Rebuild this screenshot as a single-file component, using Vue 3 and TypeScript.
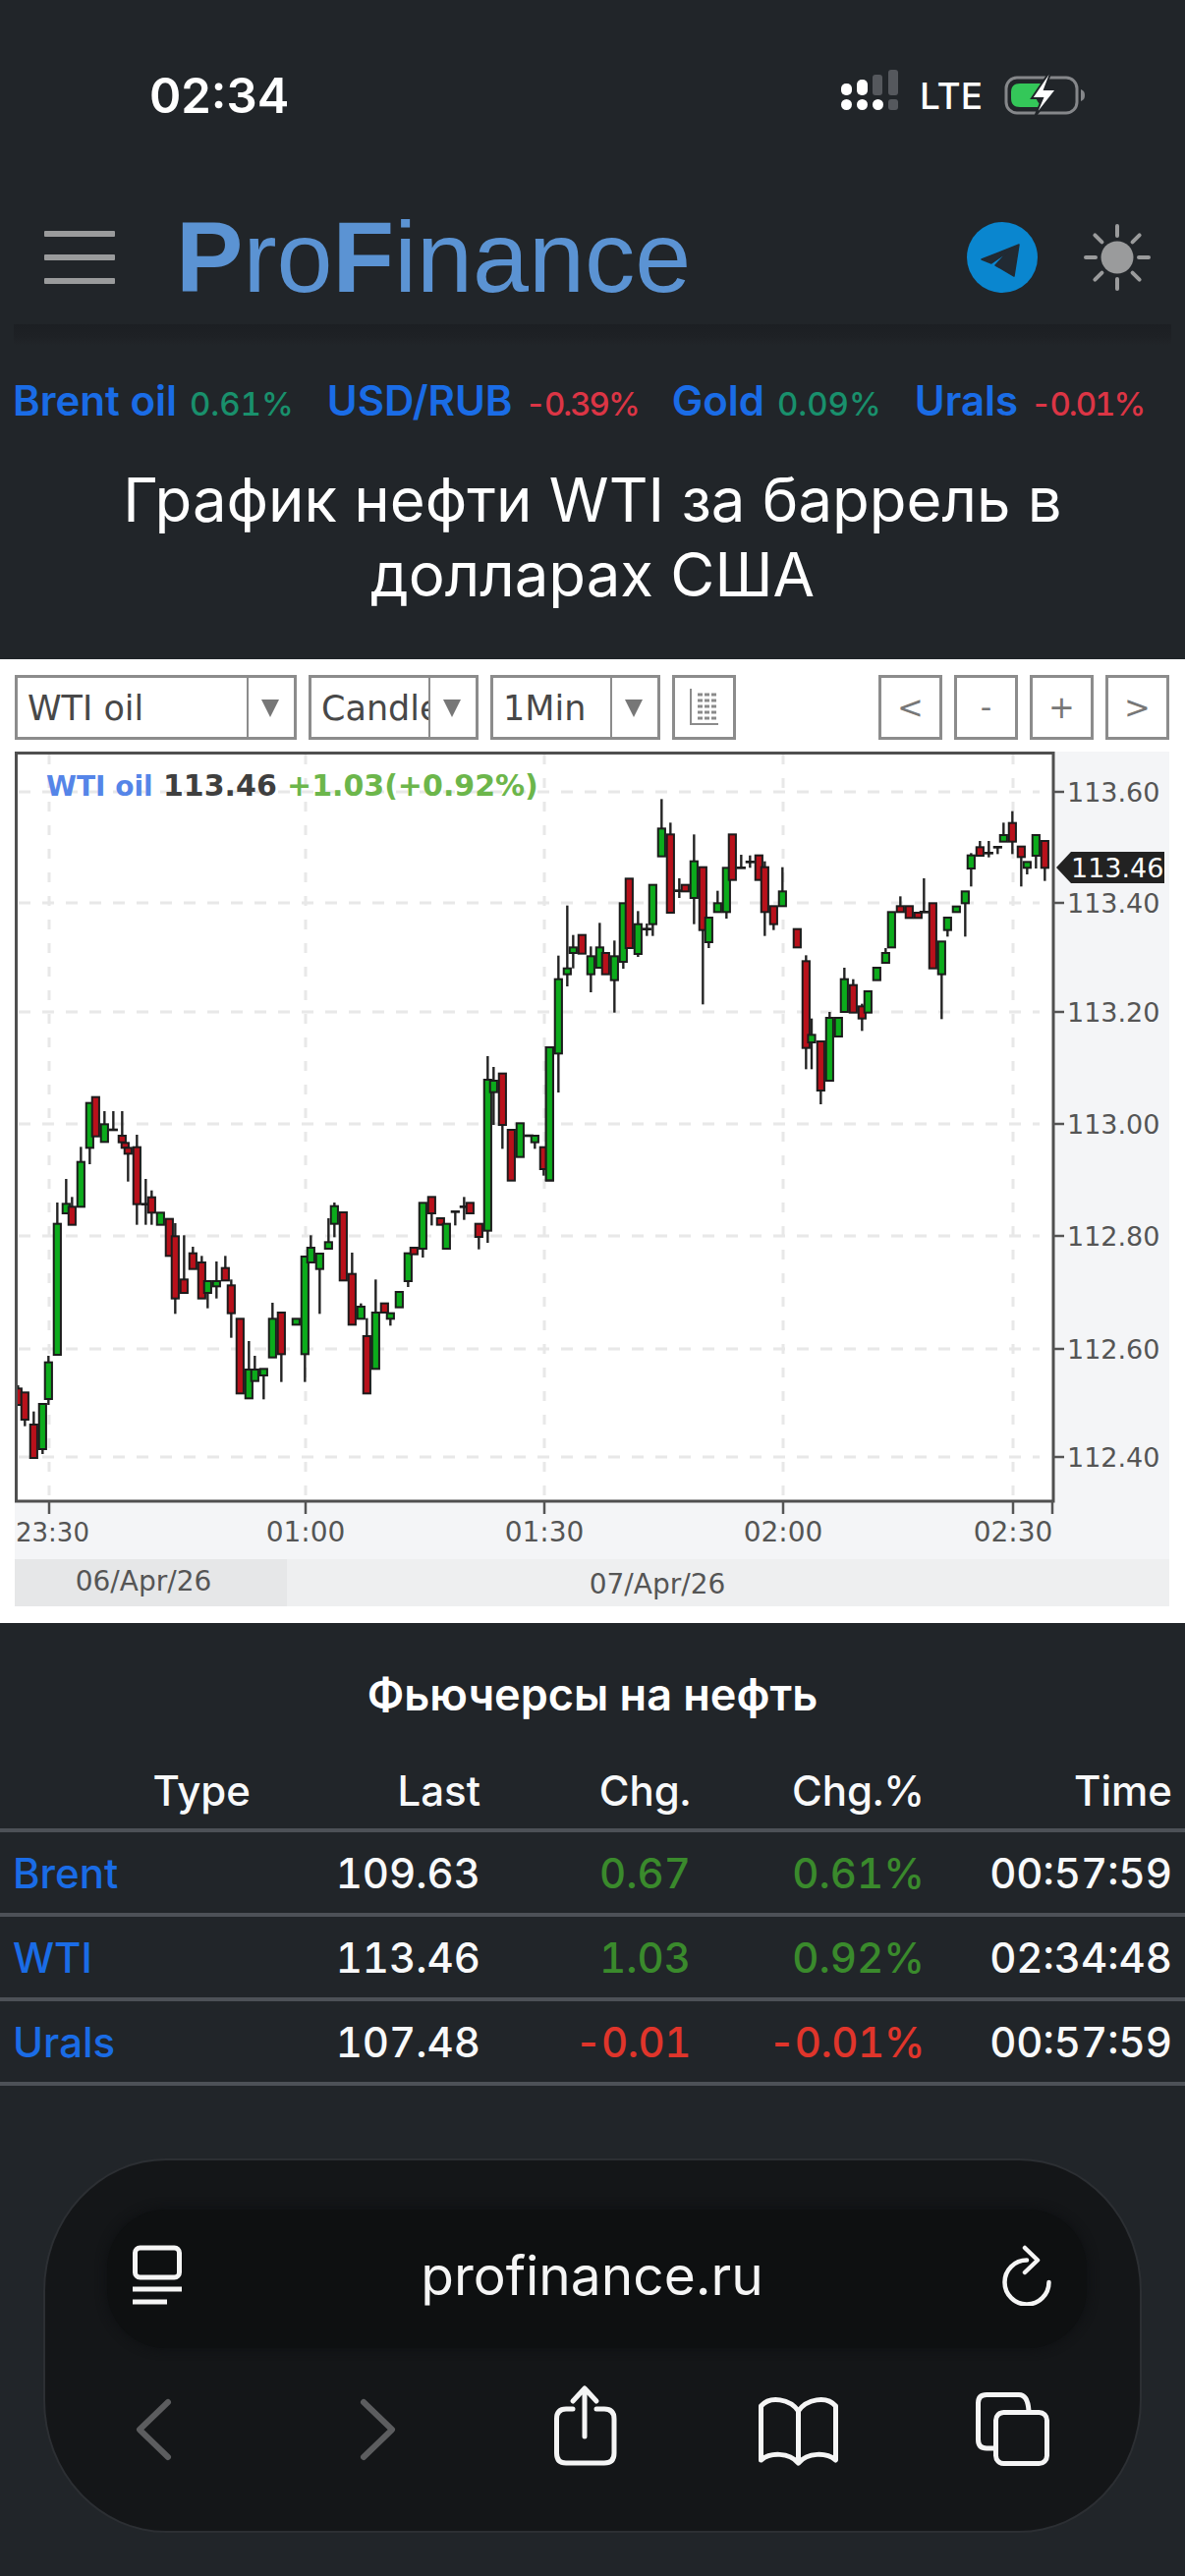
<script setup lang="ts">
// [x, bodyTop, bodyBottom, wickTop, wickBottom, up], read from chart crops (3x)
type Row = [number, number, number, number, number, number]

const fromCrop = (ox: number, oy: number, rows: Row[]) =>
  rows.map(([x, t, b, hi, lo, up]) => ({
    x: ox + x / 3,
    top: oy + t / 3,
    bottom: oy + b / 3,
    hi: oy + hi / 3,
    lo: oy + lo / 3,
    up: up === 1
  }))

const candles = [
  ...fromCrop(0, 1080, [
    [55, 1000, 1050, 990, 1050, 0], [76, 1012, 1095, 1012, 1115, 0], [103, 1110, 1212, 1070, 1212, 0],
    [130, 1047, 1185, 1047, 1200, 1], [148, 920, 1032, 900, 1050, 1], [175, 497, 897, 432, 897, 1],
    [202, 436, 465, 360, 465, 1], [220, 445, 500, 415, 500, 0], [247, 308, 445, 262, 445, 1],
    [274, 128, 265, 128, 315, 1], [292, 110, 230, 110, 230, 0], [319, 193, 247, 153, 247, 1],
    [346, 209, 211, 153, 212, 1], [373, 228, 248, 153, 248, 0], [382, 250, 265, 250, 265, 0],
    [391, 265, 283, 265, 368, 0], [418, 263, 437, 225, 500, 0], [445, 436, 438, 360, 500, 1],
    [463, 416, 463, 395, 500, 0], [490, 463, 500, 463, 500, 1], [517, 482, 595, 482, 595, 0],
    [535, 535, 725, 495, 772, 0], [562, 667, 708, 532, 708, 0], [589, 587, 635, 567, 635, 0],
    [616, 615, 725, 595, 725, 0], [634, 672, 708, 672, 755, 1], [661, 672, 688, 612, 725, 1],
    [688, 632, 670, 595, 670, 0], [706, 685, 770, 667, 845, 0], [733, 787, 1015, 787, 1015, 0],
    [760, 942, 1030, 855, 1030, 1], [778, 942, 977, 900, 977, 1], [805, 940, 960, 940, 1033, 1],
    [832, 787, 905, 738, 905, 1], [859, 768, 895, 768, 980, 0], [904, 787, 805, 787, 805, 1],
    [931, 597, 895, 597, 980, 1], [949, 570, 615, 532, 615, 1], [976, 588, 635, 588, 772, 1],
    [1003, 553, 573, 480, 573, 1], [1021, 443, 497, 432, 538, 1], [1048, 462, 670, 462, 670, 0],
    [1075, 650, 805, 585, 805, 0], [1102, 750, 787, 740, 787, 1], [1120, 840, 1015, 785, 1015, 0],
    [1147, 768, 940, 667, 940, 1], [1174, 740, 768, 740, 768, 0], [1192, 770, 787, 770, 808, 1]
  ]),
  ...fromCrop(340, 1080, [
    [199, 705, 752, 705, 752, 1], [226, 587, 672, 587, 690, 1], [244, 570, 590, 570, 590, 0],
    [271, 433, 573, 433, 600, 1], [298, 415, 465, 415, 502, 0], [325, 480, 500, 480, 500, 0],
    [343, 497, 573, 497, 573, 1], [370, 459, 461, 460, 502, 1], [397, 444, 446, 415, 485, 1],
    [415, 433, 465, 433, 465, 0], [442, 497, 537, 497, 575, 0], [469, 57, 518, -15, 555, 1],
    [487, 60, 95, 18, 195, 1], [514, 38, 195, 38, 268, 0], [541, 210, 365, 210, 365, 0],
    [568, 190, 293, 190, 293, 1], [595, 227, 229, 228, 230, 1], [613, 228, 248, 228, 268, 1],
    [640, 263, 330, 263, 350, 0], [658, -42, 365, -42, 365, 1]
  ]),
  ...fromCrop(400, 780, [
    [478, 858, 1264, 858, 1264, 1], [505, 650, 877, 578, 996, 1], [532, 617, 635, 425, 672, 1],
    [550, 553, 570, 515, 617, 1], [577, 515, 572, 515, 572, 0], [604, 580, 635, 550, 690, 1],
    [631, 553, 615, 478, 615, 1], [649, 570, 635, 570, 635, 0], [676, 580, 653, 532, 752, 1],
    [703, 418, 597, 418, 618, 1], [721, 343, 555, 343, 555, 0], [748, 482, 573, 442, 582, 1],
    [775, 496, 498, 480, 518, 1], [793, 362, 482, 362, 518, 1], [820, 190, 275, 100, 275, 1],
    [847, 208, 447, 172, 447, 0], [874, 379, 381, 342, 402, 1], [892, 362, 382, 362, 382, 0],
    [919, 290, 402, 208, 482, 1], [946, 308, 500, 308, 727, 0], [964, 462, 537, 462, 555, 1],
    [991, 418, 445, 380, 445, 1], [1018, 310, 445, 310, 465, 1], [1036, 208, 347, 208, 347, 0],
    [1063, 309, 311, 270, 312, 1], [1090, 291, 293, 272, 310, 1], [1117, 272, 347, 272, 347, 0],
    [1135, 308, 445, 290, 518, 0], [1162, 427, 482, 427, 500, 0], [1189, 382, 427, 308, 427, 1]
  ]),
  ...fromCrop(800, 780, [
    [34, 497, 553, 497, 553, 0], [61, 595, 860, 577, 925, 0], [78, 820, 843, 770, 925, 1],
    [106, 840, 990, 840, 1032, 0], [133, 768, 960, 750, 960, 1], [160, 768, 825, 768, 825, 1],
    [178, 650, 750, 615, 750, 1], [205, 668, 752, 650, 752, 0], [232, 733, 770, 725, 808, 0],
    [250, 687, 752, 687, 752, 1], [277, 615, 653, 615, 653, 1], [304, 570, 600, 555, 600, 1],
    [322, 445, 553, 445, 553, 1], [349, 427, 445, 397, 445, 0], [376, 427, 463, 427, 463, 0],
    [403, 447, 463, 447, 463, 0], [421, 444, 446, 342, 446, 1], [448, 418, 617, 418, 617, 0],
    [475, 535, 635, 535, 772, 1], [493, 462, 500, 462, 520, 1], [520, 428, 445, 428, 445, 1],
    [547, 382, 418, 382, 520, 1], [565, 272, 312, 265, 367, 1], [592, 247, 273, 228, 273, 0],
    [619, 264, 266, 228, 278, 1], [646, 246, 248, 246, 268, 1], [664, 210, 230, 172, 230, 1],
    [691, 173, 230, 137, 268, 0], [718, 245, 277, 245, 367, 0], [736, 292, 310, 292, 330, 1],
    [763, 210, 273, 210, 312, 1], [790, 228, 310, 228, 350, 0]
  ])
]

const priceLines = [
  { y: 806, label: '113.60' },
  { y: 919, label: '113.40' },
  { y: 1030, label: '113.20' },
  { y: 1144, label: '113.00' },
  { y: 1258, label: '112.80' },
  { y: 1373, label: '112.60' },
  { y: 1483, label: '112.40' }
]

const timeLines = [
  { x: 50, label: '23:30' },
  { x: 311, label: '01:00' },
  { x: 554, label: '01:30' },
  { x: 797, label: '02:00' },
  { x: 1031, label: '02:30' }
]

const ticker = [
  { name: 'Brent oil', value: '0.61%', up: true },
  { name: 'USD/RUB', value: '-0.39%', up: false },
  { name: 'Gold', value: '0.09%', up: true },
  { name: 'Urals', value: '-0.01%', up: false }
]

const futures = [
  { name: 'Brent', last: '109.63', chg: '0.67', pct: '0.61%', time: '00:57:59', up: true },
  { name: 'WTI', last: '113.46', chg: '1.03', pct: '0.92%', time: '02:34:48', up: true },
  { name: 'Urals', last: '107.48', chg: '-0.01', pct: '-0.01%', time: '00:57:59', up: false }
]

const sunRays = [0, 45, 90, 135, 180, 225, 270, 315]
</script>

<template>
  <div class="page">
    <div class="status">
      <span class="status__time">02:34</span>
      <div class="status__right">
        <svg class="status__signal" width="56" height="42" viewBox="0 0 56 42">
          <g fill="#fff">
            <rect x="0" y="25" width="11" height="11" rx="5.5" />
            <rect x="16" y="25" width="11" height="11" rx="5.5" />
            <rect x="32" y="25" width="11" height="11" rx="5.5" />
            <rect x="0" y="9" width="11" height="12" rx="5" />
            <rect x="16" y="5" width="11" height="16" rx="5" />
          </g>
          <g fill="#55585d">
            <rect x="32" y="0" width="10" height="21" rx="3" />
            <rect x="48" y="-5" width="10" height="26" rx="3" />
            <rect x="48" y="25" width="10" height="11" rx="3" />
          </g>
        </svg>
        <span class="status__lte">LTE</span>
        <svg class="status__battery" width="84" height="44" viewBox="0 0 84 44">
          <rect x="2" y="4" width="72" height="36" rx="11" fill="none" stroke="#85878a" stroke-width="3" />
          <path d="M7 19c0-6 3-9 9-9h25l2 2c-6 1-10 5-11 10 0 4 3 9 8 12H16c-6 0-9-3-9-9Z" fill="#34c759" />
          <path d="M78 16c3 1 4 3 4 6s-1 5-4 6Z" fill="#85878a" />
          <path d="M45 0 28 25h11L31 44l22-28H41l6-16Z" fill="#fff" stroke="#212529" stroke-width="2" />
        </svg>
      </div>
    </div>

    <header class="top">
      <div class="top__menu"><span></span><span></span><span></span></div>
      <div class="top__logo"><b>P</b>ro<b>F</b>inance</div>
      <svg class="top__tg" width="72" height="72" viewBox="0 0 72 72">
        <circle cx="36" cy="36" r="36" fill="#0a86cf" />
        <path d="M53 23 15 38l10 4 17-12-13 14 19 11 5-32Z" fill="#212a33" stroke="#212a33" stroke-width="1.5" stroke-linejoin="round" />
      </svg>
      <svg class="top__sun" width="72" height="72" viewBox="0 0 72 72">
        <circle cx="36" cy="36" r="16.5" fill="#9a9b9c" />
        <line
          v-for="a in sunRays"
          :key="a"
          x1="36"
          y1="4"
          x2="36"
          y2="14"
          stroke="#9a9b9c"
          stroke-width="4"
          stroke-linecap="round"
          :transform="`rotate(${a} 36 36)`"
        />
      </svg>
    </header>
    <div class="shade"></div>

    <div class="ticker">
      <span v-for="t in ticker" :key="t.name" class="ticker__item">
        <b>{{ t.name }}</b>
        <em :class="t.up ? 'ticker__up' : 'ticker__down'">{{ t.value }}</em>
      </span>
    </div>

    <h1 class="title">График нефти WTI за баррель в<br />долларах США</h1>

    <section class="chart">
      <div class="chart__tools">
        <div class="pick pick--wti"><span class="pick__text">WTI oil</span><i class="pick__arrow"></i></div>
        <div class="pick pick--type"><span class="pick__text">Candle</span><i class="pick__arrow"></i></div>
        <div class="pick pick--time"><span class="pick__text">1Min</span><i class="pick__arrow"></i></div>
        <div class="tool tool--ledger">
          <svg width="32" height="38" viewBox="0 0 32 38" fill="none" stroke="#8b8b8b">
            <path d="M2 0v36h28" stroke-width="2" />
            <path d="M9 6h20M9 12h20M9 18h20M9 24h20M9 30h20" stroke-width="3" stroke-dasharray="5 2" />
          </svg>
        </div>
        <div class="chart__nav">
          <div class="tool">&lt;</div>
          <div class="tool">-</div>
          <div class="tool">+</div>
          <div class="tool">&gt;</div>
        </div>
      </div>

      <svg class="chart__plot" width="1175" height="870" viewBox="15 765 1175 870">
        <rect x="15" y="765" width="1175" height="822" fill="#f4f5f7" />
        <rect x="15" y="765" width="1057" height="763" fill="#fff" />
        <rect x="15" y="1587" width="277" height="48" fill="#e6e7e8" />
        <rect x="292" y="1587" width="898" height="48" fill="#eeeff0" />

        <g stroke="#e8e8e8" stroke-width="3" stroke-dasharray="12 12">
          <line v-for="p in priceLines" :key="p.y" x1="19" x2="1058" :y1="p.y" :y2="p.y" />
        </g>
        <g stroke="#e8e8e8" stroke-width="3" stroke-dasharray="10 14">
          <line v-for="t in timeLines" :key="t.x" :x1="t.x" :x2="t.x" y1="768" y2="1526" />
        </g>

        <g stroke="#232323" stroke-width="2.4">
          <line
            v-for="(c, i) in candles"
            :key="i"
            :x1="c.x"
            :x2="c.x"
            :y1="c.hi"
            :y2="c.lo"
          />
        </g>
        <g stroke="#1c1c1c" stroke-width="2">
          <rect
            v-for="(c, i) in candles"
            :key="i"
            :x="c.x - 3.6"
            :y="c.top"
            width="7.2"
            :height="Math.max(c.bottom - c.top, 0.6)"
            :fill="c.up ? '#0cab1c' : '#b8111b'"
          />
        </g>

        <text class="legend" y="810">
          <tspan class="legend__name" x="47" fill="#5585e8">WTI oil</tspan>
          <tspan x="166" fill="#3f3f3f">113.46</tspan>
          <tspan x="292" fill="#6cb64b">+1.03(+0.92%)</tspan>
        </text>

        <path d="M16.5 1528V766.5H1072V1528H15" fill="none" stroke="#4f4f4f" stroke-width="3" />
        <g stroke="#555" stroke-width="2.5">
          <line v-for="p in priceLines" :key="p.y" x1="1072" x2="1083" :y1="p.y" :y2="p.y" />
          <line v-for="t in timeLines" :key="t.x" :x1="t.x" :x2="t.x" y1="1528" y2="1541" />
          <line x1="1071" x2="1071" y1="1528" y2="1541" />
        </g>
        <text v-for="p in priceLines" :key="p.y" class="axis axis--price" x="1086" :y="p.y + 10">{{ p.label }}</text>
        <text class="axis axis--first" x="16" y="1569">{{ timeLines[0].label }}</text>
        <text
          v-for="t in timeLines.slice(1)"
          :key="t.x"
          class="axis"
          text-anchor="middle"
          :x="t.x"
          y="1569"
        >{{ t.label }}</text>

        <path d="M1075 883 1090 867H1185V899H1090Z" fill="#222" />
        <text class="axis axis--tag" x="1090" y="893">113.46</text>

        <text class="axis" text-anchor="middle" x="146" y="1619">06/Apr/26</text>
        <text class="axis" text-anchor="middle" x="669" y="1622">07/Apr/26</text>
      </svg>
    </section>

    <h2 class="futures">Фьючерсы на нефть</h2>
    <div class="table">
      <div class="table__row table__row--head">
        <span>Type</span><span>Last</span><span>Chg.</span><span>Chg.%</span><span>Time</span>
      </div>
      <div v-for="f in futures" :key="f.name" class="table__row">
        <span class="table__name">{{ f.name }}</span>
        <span>{{ f.last }}</span>
        <span :class="f.up ? 'table__up' : 'table__down'">{{ f.chg }}</span>
        <span :class="f.up ? 'table__up' : 'table__down'">{{ f.pct }}</span>
        <span>{{ f.time }}</span>
      </div>
    </div>

    <div class="safari">
      <div class="safari__url">
        <svg width="50" height="62" viewBox="137 2285 50 62" fill="none" stroke="#f5f5f5">
          <rect x="139.5" y="2288" width="45" height="30" rx="5" stroke-width="5" />
          <path d="M137 2330h50M137 2343h35" stroke-width="5" />
        </svg>
        <span class="safari__host">profinance.ru</span>
        <svg width="50" height="62" viewBox="1022 2282 50 62" fill="none" stroke="#f5f5f5" stroke-width="4.5" stroke-linecap="round" stroke-linejoin="round">
          <path d="M1069.5 2320A22.5 22.5 0 1 1 1047 2297.5" />
          <path d="M1045 2285l13 12.5-13 12.5" />
        </svg>
      </div>
      <div class="safari__nav">
        <svg width="35" height="90" viewBox="140 2425 35 90" fill="none" stroke="#5c5d5f" stroke-width="6" stroke-linecap="round" stroke-linejoin="round">
          <path d="M172 2443 143 2471 172 2499" />
        </svg>
        <svg width="35" height="90" viewBox="368 2425 35 90" fill="none" stroke="#5c5d5f" stroke-width="6" stroke-linecap="round" stroke-linejoin="round">
          <path d="M371 2443 400 2471 371 2499" />
        </svg>
        <svg width="64" height="90" viewBox="565 2425 64 90" fill="none" stroke="#f5f5f5" stroke-width="5" stroke-linecap="round" stroke-linejoin="round">
          <path d="M584 2450H577Q567.5 2450 567.5 2460V2495Q567.5 2505 577 2505H616Q626 2505 626 2495V2460Q626 2450 616 2450H608" />
          <path d="M596 2478V2430M584 2442 596 2429 608 2442" />
        </svg>
        <svg width="82" height="90" viewBox="773 2425 82 90" fill="none" stroke="#f5f5f5" stroke-width="5" stroke-linejoin="round">
          <path d="M813.5 2452C805 2440 785 2436 775.5 2447V2502C785 2494 804 2494 813.5 2505C823 2494 842 2494 851.5 2502V2447C842 2436 822 2440 813.5 2452V2505" />
        </svg>
        <svg width="76" height="90" viewBox="994 2425 76 90" fill="none" stroke="#f5f5f5" stroke-width="5" stroke-linejoin="round">
          <path d="M1012 2490H1005Q996.5 2490 996.5 2481V2444Q996.5 2435.5 1005 2435.5H1038Q1047 2435.5 1048 2452" />
          <rect x="1014.5" y="2453.5" width="52" height="52" rx="8" />
        </svg>
      </div>
    </div>
  </div>
</template>

<style>
html,
body {
  background: #212529;
}
</style>

<style scoped>
.page {
  width: 1206px;
  height: 2622px;
  overflow: hidden;
  background: #212529;
  color: #f8f9fa;
  font-family: Inter, "Liberation Sans", sans-serif;
}

.status {
  height: 194px;
  padding: 0 100px 0 152px;
  box-sizing: border-box;
  display: flex;
  align-items: center;
  justify-content: space-between;
}

.status__time {
  font-size: 49px;
  font-weight: 600;
  color: #fff;
}

.status__right {
  display: flex;
  align-items: center;
}

.status__signal {
  margin-right: 24px;
  overflow: visible;
}

.status__lte {
  font-size: 37px;
  font-weight: 500;
  color: #fff;
  margin-right: 22px;
}

.top {
  height: 136px;
  padding: 0 33px 0 45px;
  box-sizing: border-box;
  display: flex;
  align-items: center;
}

.top__menu {
  width: 72px;
  margin-right: 62px;
  display: flex;
  flex-direction: column;
  gap: 18px;
}

.top__menu span {
  height: 6px;
  border-radius: 1px;
  background: #9a9b9c;
}

.top__logo {
  flex: 1;
  font-family: "Liberation Sans", sans-serif;
  font-size: 102.5px;
  line-height: 1;
  color: #5b93d3;
}

.top__sun {
  margin-left: 45px;
}

.shade {
  height: 21px;
  margin: 0 14px;
  background: linear-gradient(#1c1f23, #1e2125 60%, #212529);
}

.ticker {
  height: 112px;
  padding-left: 13px;
  display: flex;
  align-items: center;
  gap: 34px;
  white-space: nowrap;
}

.ticker__item {
  display: flex;
  align-items: baseline;
  gap: 13px;
}

.ticker__item b {
  font-size: 42px;
  font-weight: 600;
  color: #1a6ce6;
}

.ticker__item em {
  font-style: normal;
  font-weight: 500;
  font-size: 33px;
  font-variant-numeric: tabular-nums;
}

.ticker__up {
  color: #19906c;
}

.ticker__item .ticker__down {
  color: #dc3545;
  letter-spacing: -2px;
}

.title {
  margin: 8px 0 48px;
  font-size: 61.7px;
  font-weight: 400;
  line-height: 76px;
  text-align: center;
  color: #fff;
}

.chart {
  height: 981px;
  padding: 16px 16px 0 15px;
  box-sizing: border-box;
  background: #fff;
  font-family: "DejaVu Sans", sans-serif;
}

.chart__tools {
  height: 66px;
  margin-bottom: 12px;
  display: flex;
  gap: 12px;
}

.pick {
  position: relative;
  box-sizing: border-box;
  height: 66px;
  padding-left: 10px;
  border: 3px solid #8c8c8c;
  font-size: 35px;
  line-height: 62px;
  color: #484848;
  overflow: hidden;
  white-space: nowrap;
}

.pick--wti {
  width: 287px;
}

.pick--type {
  width: 173px;
}

.pick--time {
  width: 173px;
}

.pick__arrow {
  position: absolute;
  top: 0;
  right: 0;
  width: 46px;
  height: 60px;
  background: #fff;
  border-left: 2px solid #8c8c8c;
}

.pick__arrow::after {
  content: "";
  position: absolute;
  top: 22px;
  left: 13px;
  border-style: solid;
  border-width: 18px 9px 0;
  border-color: #777 transparent transparent;
}

.chart__nav {
  margin-left: auto;
  display: flex;
  gap: 12px;
}

.tool {
  box-sizing: border-box;
  width: 65px;
  height: 66px;
  border: 3px solid #8c8c8c;
  display: flex;
  align-items: center;
  justify-content: center;
  font-size: 32px;
  color: #777;
}

.chart__plot {
  display: block;
}

.legend {
  font-size: 30px;
  font-weight: 700;
}

.legend__name {
  font-size: 28px;
}

.axis {
  font-size: 28px;
  fill: #555;
}

.axis--price {
  font-size: 27px;
}

.axis--first {
  font-size: 26px;
}

.axis--tag {
  font-size: 27px;
  fill: #fff;
}

.futures {
  margin: 49px 0 0;
  font-size: 45px;
  font-weight: 600;
  line-height: 48px;
  text-align: center;
  color: #fff;
}

.table {
  margin-top: 34px;
  font-size: 42px;
  font-weight: 500;
  font-variant-numeric: tabular-nums;
}

.table__row {
  height: 82px;
  padding: 0 13px;
  display: grid;
  grid-template-columns: 242px 234px 214px 238px 252px;
  align-items: center;
  text-align: right;
  border-bottom: 4px solid #4d5157;
}

.table__row--head {
  height: 78px;
}

.table__row .table__name {
  text-align: left;
  color: #1a6ce6;
}

.table__up {
  color: #3a8a2c;
}

.table__down {
  color: #e0352b;
  letter-spacing: -0.5px;
}

.safari {
  width: 1118px;
  height: 381px;
  margin: 74px 0 0 44px;
  padding: 50px 54px 0 63px;
  box-sizing: border-box;
  border: 2px solid #2c2f33;
  border-radius: 125px / 135px;
  background: #141618;
}

.safari__url {
  height: 141px;
  padding: 0 36px 8px 26px;
  box-sizing: border-box;
  border-radius: 60px;
  background: #0e1011;
  box-shadow: 0 0 10px 2px #0f1113;
  display: flex;
  align-items: center;
  justify-content: space-between;
}

.safari__host {
  font-size: 55px;
  color: #f5f5f5;
}

.safari__nav {
  margin: 37px 0 0 30px;
  display: grid;
  grid-template-columns: 228px 197px 208px 221px 76px;
}

.safari__nav svg {
  overflow: visible;
}
</style>
